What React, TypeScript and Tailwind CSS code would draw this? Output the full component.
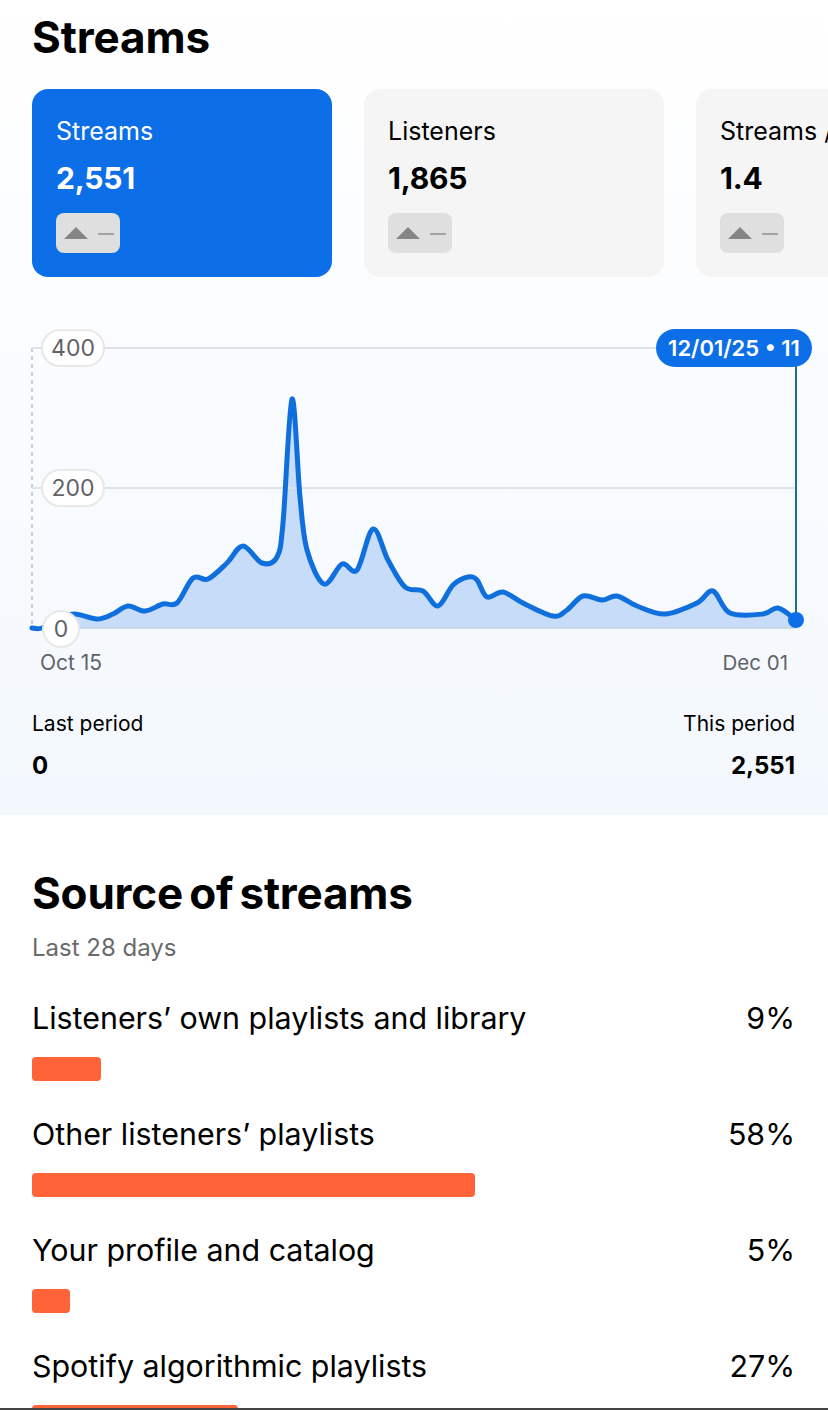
import React from 'react';

const font = { fontFamily: '"Inter", "Liberation Sans", sans-serif' };

const metrics = [
  { label: 'Streams', value: '2,551', active: true },
  { label: 'Listeners', value: '1,865', active: false },
  { label: 'Streams / listener', value: '1.4', active: false },
];

const sources = [
  { label: 'Listeners’ own playlists and library', pct: '9%', width: 69 },
  { label: 'Other listeners’ playlists', pct: '58%', width: 443 },
  { label: 'Your profile and catalog', pct: '5%', width: 38 },
  { label: 'Spotify algorithmic playlists', pct: '27%', width: 206 },
];

// traced off the reference, in page pixels minus the chart's top-left (0, 328)
const trace: [number, number][] = [
  [32, 300], [42, 300], [60, 290], [75, 286], [97, 291], [113, 286], [128, 278], [145, 283], [163, 276],
  [177, 275], [193, 250], [208, 251], [227, 235], [243, 218], [262, 235], [277, 229], [283, 195], [292, 71],
  [300, 169], [307, 222], [324, 256], [342, 236], [357, 242], [373, 201], [388, 232], [405, 259], [423, 263],
  [438, 278], [453, 257], [468, 249], [477, 252], [487, 269], [503, 264], [523, 275], [553, 288], [567, 282],
  [583, 268], [602, 272], [617, 268], [637, 278], [665, 286], [697, 275], [713, 263], [730, 285], [763, 286],
  [778, 280], [796, 292],
];

function smooth(pts: [number, number][]) {
  let d = `M${pts[0][0]} ${pts[0][1]}`;
  for (let i = 0; i < pts.length - 1; i++) {
    const p0 = pts[i - 1] || pts[i];
    const p1 = pts[i];
    const p2 = pts[i + 1];
    const p3 = pts[i + 2] || p2;
    const c1x = p1[0] + (p2[0] - p0[0]) / 6;
    const c1y = p1[1] + (p2[1] - p0[1]) / 6;
    const c2x = p2[0] - (p3[0] - p1[0]) / 6;
    const c2y = p2[1] - (p3[1] - p1[1]) / 6;
    d += ` C${c1x} ${c1y} ${c2x} ${c2y} ${p2[0]} ${p2[1]}`;
  }
  return d;
}

const line = smooth(trace);

const Delta = () => (
  <div className="mt-4 flex h-10 w-16 items-center gap-[10px] rounded-lg bg-[#dfdfdf] pl-2">
    <svg width="24" height="12" viewBox="0 0 24 12">
      <path d="M12 0 L24 12 L0 12 Z" fill="#858585" />
    </svg>
    <div className="mt-[2px] h-[2px] w-[16px] bg-[#a3a3a3]" />
  </div>
);

const MetricCard = ({ label, value, active }: { label: string; value: string; active: boolean }) => (
  <div
    className={`h-[188px] w-[300px] shrink-0 overflow-hidden whitespace-nowrap rounded-2xl pl-6 pt-[26px] ${
      active ? 'bg-[#0d6fe8] text-white' : 'bg-[#f5f5f5] text-black'
    }`}
  >
    <div className="text-[25px] leading-8">{label}</div>
    <div className="mt-[12px] text-[30px] font-bold leading-[38px] tracking-[-0.2px]">{value}</div>
    <Delta />
  </div>
);

const AxisPill = ({ text, top }: { text: string; top: number }) => (
  <div
    className="absolute left-[41px] flex h-[38px] w-16 items-center justify-center rounded-full border-2 border-[#e8e8e8] bg-white text-[23px] text-[#5f6368]"
    style={{ top }}
  >
    {text}
  </div>
);

const Chart = () => (
  <div className="relative h-[322px]">
    <svg className="absolute inset-0" width="828" height="322" viewBox="0 0 828 322">
      <path d={`${line} L796 300 L32 300 Z`} fill="#c6dcf8" />
      <path d="M32 20 V300" stroke="#c9ccd0" strokeWidth="2" strokeDasharray="4 4" />
      <path d="M32 20 H796 M32 160 H796" stroke="#dfe2e6" strokeWidth="2" />
      <path d="M32 300 H796" stroke="#c3d0e0" strokeWidth="1.5" />
      <path d="M796 20 V292" stroke="#1f6f95" strokeWidth="2" />
      <path d={line} fill="none" stroke="#0f6fdc" strokeWidth="5" strokeLinejoin="round" strokeLinecap="round" />
      <circle cx="796" cy="292" r="8" fill="#0d6fe8" />
    </svg>
    <AxisPill text="400" top={1} />
    <AxisPill text="200" top={141} />
    <div className="absolute left-[42px] top-[282px] flex size-[38px] items-center justify-center rounded-full border-2 border-[#e8e8e8] bg-white text-[23px] text-[#5f6368]">
      0
    </div>
    <div className="absolute left-[656px] top-[1px] flex h-[38px] w-[156px] items-center justify-center whitespace-nowrap rounded-full bg-[#0d6fe8] text-[22px] font-semibold text-white">
      12/01/25 • 11
    </div>
    <div className="absolute left-[40px] top-[321px] text-[21px] leading-7 text-[#5f6368]">Oct 15</div>
    <div className="absolute right-[40px] top-[321px] text-[20.5px] leading-7 text-[#5f6368]">Dec 01</div>
  </div>
);

const SourceRow = ({ label, pct, width }: { label: string; pct: string; width: number }) => (
  <div className="h-[116px]">
    <div className="flex h-10 items-center justify-between text-[30.4px] text-black">
      <span>{label}</span>
      <span>{pct}</span>
    </div>
    <div className="mt-[18px] h-6 rounded bg-[#ff6337]" style={{ width }} />
  </div>
);

export default function App() {
  return (
    <div className="relative h-[1410px] w-[828px] overflow-hidden bg-white" style={font}>
      <section className="h-[815px] bg-gradient-to-b from-white to-[#f3f8fe]">
        <h1 className="h-[89px] pl-8 pt-[9px] text-[44px] font-bold leading-[56px] tracking-[-0.1px] text-black">Streams</h1>
        <div className="flex gap-8 overflow-hidden pl-8">
          {metrics.map((m) => (
            <MetricCard key={m.label} {...m} />
          ))}
        </div>
        <div className="mt-[51px]">
          <Chart />
        </div>
        <div className="mt-[60px] flex justify-between pl-8 pr-[33px] text-black">
          <div>
            <div className="text-[21px] leading-7">Last period</div>
            <div className="mt-[12px] text-[24px] font-bold leading-8">0</div>
          </div>
          <div className="text-right">
            <div className="text-[21px] leading-7">This period</div>
            <div className="mt-[12px] text-[24px] font-bold leading-8">2,551</div>
          </div>
        </div>
      </section>
      <section className="pl-8 pr-[33px]">
        <h2 className="mt-[50px] text-[44px] font-bold leading-[56px] tracking-[-0.2px] text-black [word-spacing:-4px]">
          Source of streams
        </h2>
        <div className="mt-[11px] text-[24px] leading-8 text-[#6a6a6a]">Last 28 days</div>
        <div className="mt-[35px]">
          {sources.map((s) => (
            <SourceRow key={s.label} {...s} />
          ))}
        </div>
      </section>
      <div className="absolute inset-x-0 bottom-0 h-[2px] bg-[#444444]" />
    </div>
  );
}
